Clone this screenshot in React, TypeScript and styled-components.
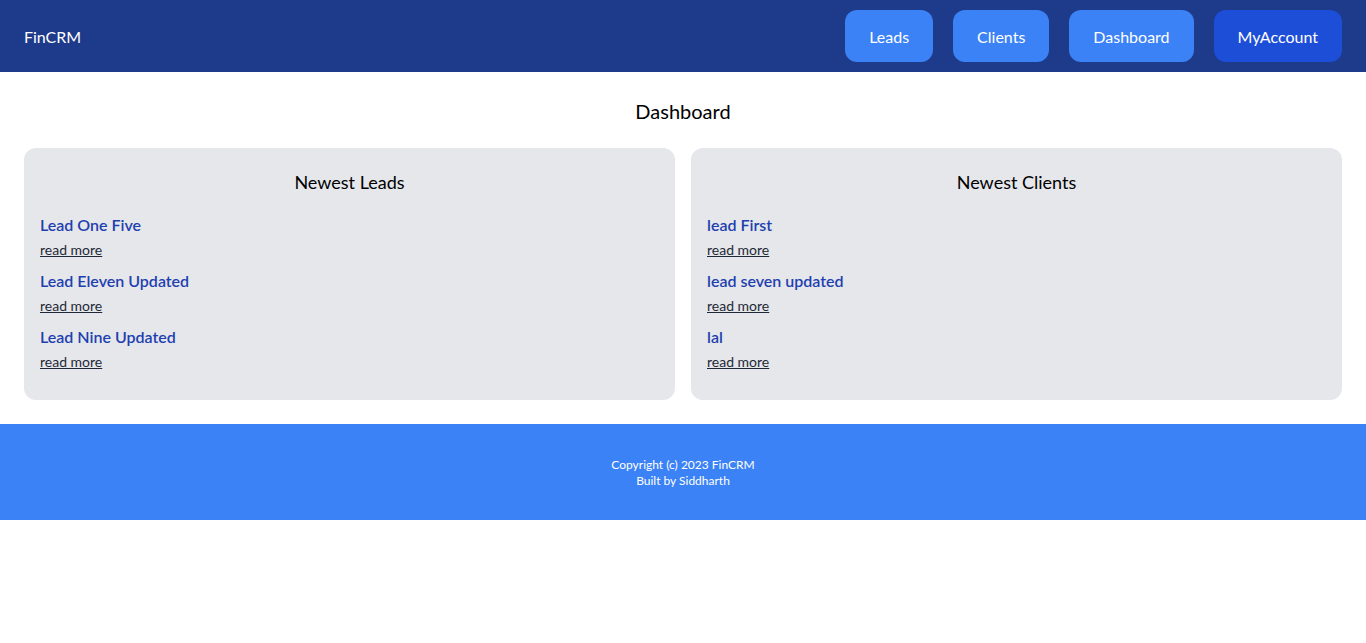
import React from "react";
import styled, { createGlobalStyle } from "styled-components";

const Global = createGlobalStyle`
  * { box-sizing: border-box; }
  body {
    margin: 0;
    font-family: "Lato", "Open Sans", sans-serif;
    background: #ffffff;
    color: #000000;
  }
  p, h1, h2, h3 { margin: 0; }
`;

const Nav = styled.nav`
  display: flex;
  align-items: center;
  justify-content: space-between;
  height: 72px;
  padding: 0 24px;
  background: #1e3a8a;
`;

const Brand = styled.a`
  color: #ffffff;
  font-size: 16px;
  line-height: 24px;
  padding-top: 2px;
  text-decoration: none;
`;

const Menu = styled.div`
  display: flex;
  align-items: center;
  gap: 20px;
`;

const NavButton = styled.a<{ $dark?: boolean }>`
  display: flex;
  align-items: center;
  height: 52px;
  padding: 2px 24px 0;
  border-radius: 12px;
  background: ${(p) => (p.$dark ? "#1d4ed8" : "#3b82f6")};
  color: #ffffff;
  font-size: 16px;
  line-height: 24px;
  text-decoration: none;
`;

const Main = styled.main`
  padding: 24px 24px 24px;
`;

const Title = styled.h1`
  text-align: center;
  font-size: 20px;
  line-height: 28px;
  font-weight: 400;
  padding-top: 1px;
  margin-bottom: 23px;
`;

const Grid = styled.div`
  display: grid;
  grid-template-columns: 1fr 1fr;
  gap: 16px;
`;

const Card = styled.section`
  background: #e5e7eb;
  border-radius: 12px;
  padding: 20px 16px 28px;
`;

const CardTitle = styled.h2`
  text-align: center;
  font-size: 18px;
  line-height: 28px;
  font-weight: 400;
  margin-bottom: 16px;
`;

const List = styled.div`
  display: flex;
  flex-direction: column;
  gap: 8px;
`;

const Item = styled.div`
  display: flex;
  flex-direction: column;
  align-items: flex-start;
  gap: 4px;
`;

const ItemName = styled.p`
  color: #1e40af;
  font-weight: 600;
  font-size: 16px;
  line-height: 24px;
  padding-top: 1px;
  margin-bottom: -1px;
`;

const ReadMore = styled.a`
  color: #1f2937;
  font-size: 14px;
  line-height: 20px;
  text-decoration: underline;
`;

const Footer = styled.footer`
  background: #3b82f6;
  padding: 33px 0 31px;
  text-align: center;
  color: #ffffff;
  font-size: 12px;
  line-height: 16px;
`;

const leads = ["Lead One Five", "Lead Eleven Updated", "Lead Nine Updated"];
const clients = ["lead First", "lead seven updated", "lal"];

function Panel({ title, items }: { title: string; items: string[] }) {
  return (
    <Card>
      <CardTitle>{title}</CardTitle>
      <List>
        {items.map((name) => (
          <Item key={name}>
            <ItemName>{name}</ItemName>
            <ReadMore href="#">read more</ReadMore>
          </Item>
        ))}
      </List>
    </Card>
  );
}

export default function App() {
  return (
    <>
      <Global />
      <Nav>
        <Brand href="#">FinCRM</Brand>
        <Menu>
          <NavButton href="#">Leads</NavButton>
          <NavButton href="#">Clients</NavButton>
          <NavButton href="#">Dashboard</NavButton>
          <NavButton href="#" $dark>
            MyAccount
          </NavButton>
        </Menu>
      </Nav>
      <Main>
        <Title>Dashboard</Title>
        <Grid>
          <Panel title="Newest Leads" items={leads} />
          <Panel title="Newest Clients" items={clients} />
        </Grid>
      </Main>
      <Footer>
        <p>Copyright (c) 2023 FinCRM</p>
        <p>Built by Siddharth</p>
      </Footer>
    </>
  );
}
